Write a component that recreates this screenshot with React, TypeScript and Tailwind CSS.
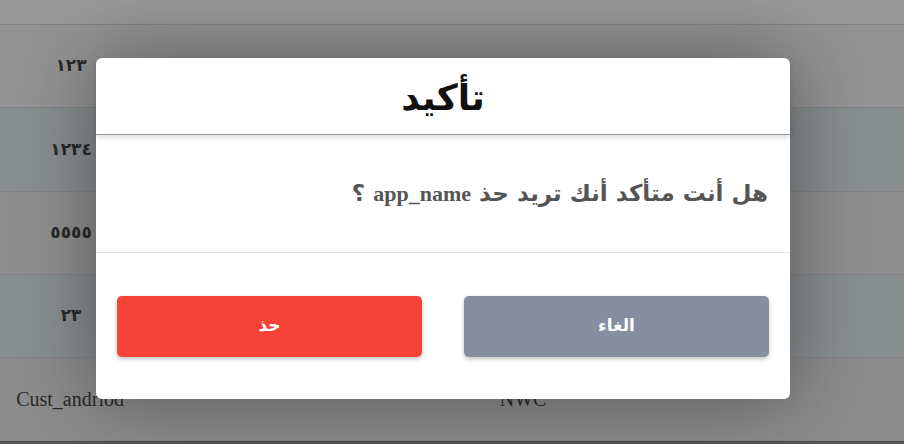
import React from "react";

const rows = [
  { a: "", b: "", bg: "bg-[#989898]", h: "h-[25px]" },
  { a: "١٢٣", b: "", bg: "bg-[#939393]", h: "h-[83px]" },
  { a: "١٢٣٤", b: "", bg: "bg-[#898e90]", h: "h-[84px]" },
  { a: "٥٥٥٥", b: "", bg: "bg-[#8f8f8f]", h: "h-[83px]" },
  { a: "٢٣", b: "", bg: "bg-[#898e90]", h: "h-[83px]" },
  { a: "Cust_andriod", b: "NWC", bg: "bg-[#8c8c8c]", h: "h-[83px]" },
];

export default function App() {
  return (
    <div className="relative w-[904px] h-[444px] overflow-hidden bg-[#8c8c8c]">
      {/* background table under the overlay */}
      <div className="flex flex-col">
        {rows.map((r, i) => (
          <div
            key={i}
            className={`${r.bg} ${r.h} flex items-center border-b border-[#838383] text-[#2a2a2a]`}
          >
            <div
              className={`w-[144px] text-center ${
                r.a.startsWith("Cust")
                  ? "font-['Liberation_Serif',serif] text-[20px] pr-[2px]"
                  : "font-['DejaVu_Sans',sans-serif] font-bold text-[17px]"
              }`}
            >
              {r.a}
            </div>
            <div className="w-[772px] text-center font-['Liberation_Serif',serif] text-[20px]">
              {r.b}
            </div>
          </div>
        ))}
      </div>
      <div className="h-[3px] bg-[#555]" />

      {/* confirm dialog */}
      <div
        dir="rtl"
        className="absolute left-[96px] top-[58px] w-[694px] h-[341px] bg-white rounded-[6px] flex flex-col shadow-[0_0_80px_rgba(0,0,0,0.4)] font-['DejaVu_Sans',sans-serif]"
      >
        <div className="h-[77px] flex items-center justify-center border-b border-[#9a9a9a] shadow-[0_3px_5px_rgba(0,0,0,0.12)]">
          <h2 className="text-[36px] font-bold text-[#111] leading-none pt-1">تأكيد</h2>
        </div>
        <div className="h-[118px] flex items-center px-[22px] border-b border-[#e2e2e2]">
          <p className="text-[23px] font-bold text-[#555] leading-none">
            هل أنت متأكد أنك تريد حذ{" "}
            <span className="font-['Liberation_Serif',serif] text-[22px]">app_name</span> ؟
          </p>
        </div>
        <div className="flex-1 flex items-center gap-[42px] px-[21px]">
          <button className="flex-1 h-[61px] rounded-[5px] bg-[#868fa0] text-white font-bold text-[17px] shadow-[0_2px_4px_rgba(0,0,0,0.25)]">
            الغاء
          </button>
          <button className="flex-1 h-[61px] rounded-[5px] bg-[#f44336] text-white font-bold text-[17px] shadow-[0_2px_4px_rgba(0,0,0,0.25)]">
            حذ
          </button>
        </div>
      </div>
    </div>
  );
}
